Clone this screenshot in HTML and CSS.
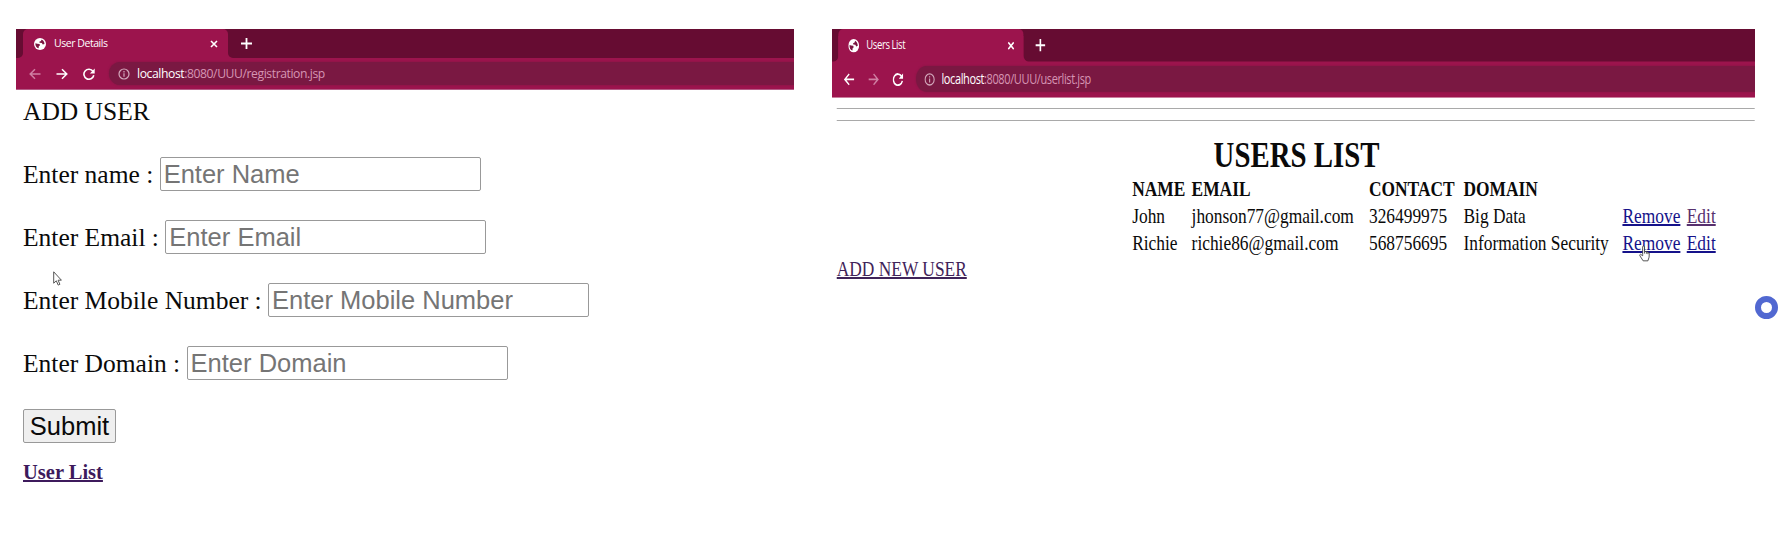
FILE: index.html
```html
<!DOCTYPE html>
<html lang="en">
<head>
<meta charset="utf-8">
<title>User Details</title>
<link rel="stylesheet" href="styles.css">
</head>
<body>
<svg class="defs" width="0" height="0">
  <symbol id="globe" viewBox="0 0 12 12"><circle cx="6" cy="6" r="6" fill="#fff"/><path d="M1.400 5.200 3.200 5.800l2.300.2.500 1.200-1.300 1.300v1.700C2.400 9.800 1.100 7.600 1.400 5.200zM5.200 1.500h2.400L7 3l-1.700.8.3 1 2.200.2 1 1.600 1.700-.6C10.500 3.700 9 1.700 7 1.400z" fill="#7a1540"/></symbol>
  <symbol id="close" viewBox="0 0 8 8"><path d="M1 1l6 6M7 1l-6 6" stroke="#fff" stroke-width="1.600"/></symbol>
  <symbol id="plus" viewBox="0 0 11 11"><path d="M5.500 0v11M0 5.500h11" stroke="#fff" stroke-width="1.800"/></symbol>
  <symbol id="arrow" viewBox="0 0 12 12"><path d="M.5 6h10.500M6 1.200 10.800 6 6 10.800" fill="none" stroke="currentColor" stroke-width="1.500"/></symbol>
  <symbol id="reload" viewBox="0 0 12 12"><path d="M10 3.300A5 5 0 1 0 10.800 7.300" fill="none" stroke="#fff" stroke-width="1.600"/><path d="M11.700.6v4.800H6.900z" fill="#fff"/></symbol>
  <symbol id="info" viewBox="0 0 12 12"><circle cx="6" cy="6" r="5" fill="none" stroke="#d3a9bc" stroke-width="1.200"/><path d="M6 5.300v3.400M6 3.100v1.300" stroke="#d3a9bc" stroke-width="1.200"/></symbol>
</svg>
<main class="stage">
  <section class="panel panel-form">
    <div class="chrome">
      <div class="strip">
        <div class="tab"><svg class="globe"><use href="#globe"/></svg><span class="title">User Details</span><svg class="close"><use href="#close"/></svg></div>
        <svg class="plus"><use href="#plus"/></svg>
      </div>
      <div class="toolbar">
        <svg class="nav back dim"><use href="#arrow"/></svg><svg class="nav"><use href="#arrow"/></svg><svg class="nav"><use href="#reload"/></svg>
        <div class="address"><svg class="info"><use href="#info"/></svg><span class="url"><b>localhost</b>:8080/UUU/registration.jsp</span></div>
      </div>
    </div>
    <form class="form">
      <div class="heading">ADD USER</div>
      <label class="field">Enter name : <input placeholder="Enter Name"></label>
      <label class="field">Enter Email : <input placeholder="Enter Email"></label>
      <label class="field">Enter Mobile Number : <input placeholder="Enter Mobile Number"></label>
      <label class="field">Enter Domain : <input placeholder="Enter Domain"></label>
      <div class="field"><button type="button">Submit</button></div>
      <a class="list-link" href="#">User List</a>
    </form>
    <svg class="pointer" viewBox="0 0 9 15"><path d="M.7.8v11.400l2.600-2.400 1.900 4.300 1.700-.8-1.800-4.100h3.300z" fill="#fff" stroke="#444" stroke-width=".9"/></svg>
  </section>
  <section class="panel panel-list">
    <div class="chrome-slot">
      <div class="chrome chrome-small">
        <div class="strip">
          <div class="tab"><svg class="globe"><use href="#globe"/></svg><span class="title">Users List</span><svg class="close"><use href="#close"/></svg></div>
          <svg class="plus"><use href="#plus"/></svg>
        </div>
        <div class="toolbar">
          <svg class="nav back"><use href="#arrow"/></svg><svg class="nav dim"><use href="#arrow"/></svg><svg class="nav"><use href="#reload"/></svg>
          <div class="address"><svg class="info"><use href="#info"/></svg><span class="url"><b>localhost</b>:8080/UUU/userlist.jsp</span></div>
        </div>
      </div>
    </div>
    <div class="list">
      <hr><hr>
      <h1>USERS LIST</h1>
      <div class="users">
        <b>NAME</b><b>EMAIL</b><b>CONTACT</b><b>DOMAIN</b><i></i><i></i>
        <span>John</span><span>jhonson77@gmail.com</span><span>326499975</span><span>Big Data</span><a href="#">Remove</a><a class="seen" href="#">Edit</a>
        <span>Richie</span><span>richie86@gmail.com</span><span>568756695</span><span>Information Security</span><a href="#">Remove</a><a href="#">Edit</a>
      </div>
      <a class="add" href="#">ADD NEW USER</a>
    </div>
    <svg class="hand" viewBox="0 0 12 18"><path d="M4 10V1.800Q4 .8 5 .8T6 1.800V6.500L10 7.600Q11.300 8 11.200 9.500L11 13 9.700 17H4.500L1 11.500Q.5 10 1.700 9.800L4 11.500zM6 6.500V9M8 7.200V9.300M9.700 7.700V9.700" fill="#fff" stroke="#333" stroke-width=".9"/></svg>
  </section>
  <span class="ring"></span>
</main>
</body>
</html>
```

FILE: styles.css
```css
* { box-sizing: border-box; }
body { margin: 0; background: #fff; color: #0a0a0a; font-family: "Liberation Serif", serif; }
svg { display: block; flex: none; }
.defs { position: absolute; }
.stage { position: relative; display: flex; gap: 38px; width: 1784px; height: 534px; padding: 29px 0 0 16px; overflow: hidden; }
.panel { position: relative; flex: none; }
.panel-form { width: 778px; }
.panel-list { width: 923px; }

.chrome { height: 61px; background: #9c144d; font-family: "Open Sans", "Noto Sans", sans-serif; color: #fff; border-bottom: 1px solid #b45c86; }
.strip { display: flex; align-items: stretch; height: 29px; background: linear-gradient(#660c32 6px, #9c144d 6px); }
.strip::before { content: ""; width: 7px; background: #660c32; border-radius: 0 0 5px 0; }
.strip::after { content: ""; flex: 1; margin-left: -24px; background: #660c32; border-radius: 0 0 0 5px; }
.tab { display: flex; align-items: center; width: 205px; height: 29px; padding: 0 10px 0 11px; background: #9c144d; border-radius: 5px 5px 0 0; }
.globe { width: 12px; height: 12px; }
.title { margin: -1px 0 0 8px; font-size: 10.500px; letter-spacing: -0.450px; line-height: 14px; flex: 1; white-space: nowrap; }
.close { width: 8px; height: 8px; }
.plus { position: relative; z-index: 1; align-self: center; width: 11px; height: 11px; margin: 0 0 0 13px; }
.toolbar { display: flex; align-items: center; height: 31px; padding-left: 13px; }
.nav { width: 12px; height: 12px; margin-right: 15px; color: #fff; }
.back { transform: scaleX(-1); }
.dim { color: #cf7fa2; }
.address { display: flex; align-items: center; flex: 1; height: 23px; margin-left: -1px; padding-left: 9px; background: #7a1842; border-radius: 12px 0 0 12px; box-shadow: 0 0 2px #7a1842; clip-path: inset(-3px 0 -3px -3px); }
.info { width: 12px; height: 12px; }
.url { margin-left: 7px; font-size: 12.200px; letter-spacing: -0.430px; color: #d695b3; white-space: nowrap; }
.url b { font-weight: 400; color: #fff; }
.chrome-slot { height: 68px; }
.chrome-small { width: 1021px; transform: scale(.904, 1.12); transform-origin: 0 0; border-bottom-color: #9c144d; }

.form { padding: 5px 0 0 7px; font-size: 25.500px; }
.heading { height: 62px; line-height: 34px; }
.field { display: block; height: 63.100px; line-height: 34px; white-space: nowrap; }
.field input { width: 321px; height: 34px; padding: 0 3px; font: 25.500px "Liberation Sans", sans-serif; border: 1px solid #999; border-radius: 2px; vertical-align: baseline; }
.field input::placeholder { color: #757575; }
.field button { width: 93px; height: 34px; padding: 0; font: 25.500px "Liberation Sans", sans-serif; color: #0a0a0a; background: #efefef; border: 1px solid #999; border-radius: 2px; }
.list-link { display: block; width: max-content; margin-top: -12px; font-size: 20.500px; font-weight: 700; line-height: 24px; color: #3d1a5c; text-decoration-thickness: 2px; }
.pointer { position: absolute; left: 37px; top: 242px; width: 9px; height: 15px; }

.list { width: 1168px; padding: 11px 0 0 6px; font-size: 22px; transform: scaleX(.79); transform-origin: 0 0; }
.list hr { height: 1px; margin: 0 0 11px; border: 0; background: #a9a9a9; }
.list h1 { margin: 13px 0 -1px 477px; font-size: 36.500px; line-height: 42px; }
.users { display: grid; grid-template-columns: 75.200px 224.500px 119.700px 201.200px 81.400px 60px; padding-left: 374px; line-height: 27px; white-space: nowrap; }
.list a { color: #15128a; justify-self: start; text-decoration-thickness: 1.500px; }
.list .seen { color: #57306e; }
.list .add { color: #3f2359; line-height: 25px; }
.hand { position: absolute; left: 807px; top: 216px; width: 11px; height: 17px; }
.ring { position: absolute; left: 1755px; top: 296px; width: 23px; height: 23px; border: 6px solid #5168d1; border-radius: 50%; }
```
